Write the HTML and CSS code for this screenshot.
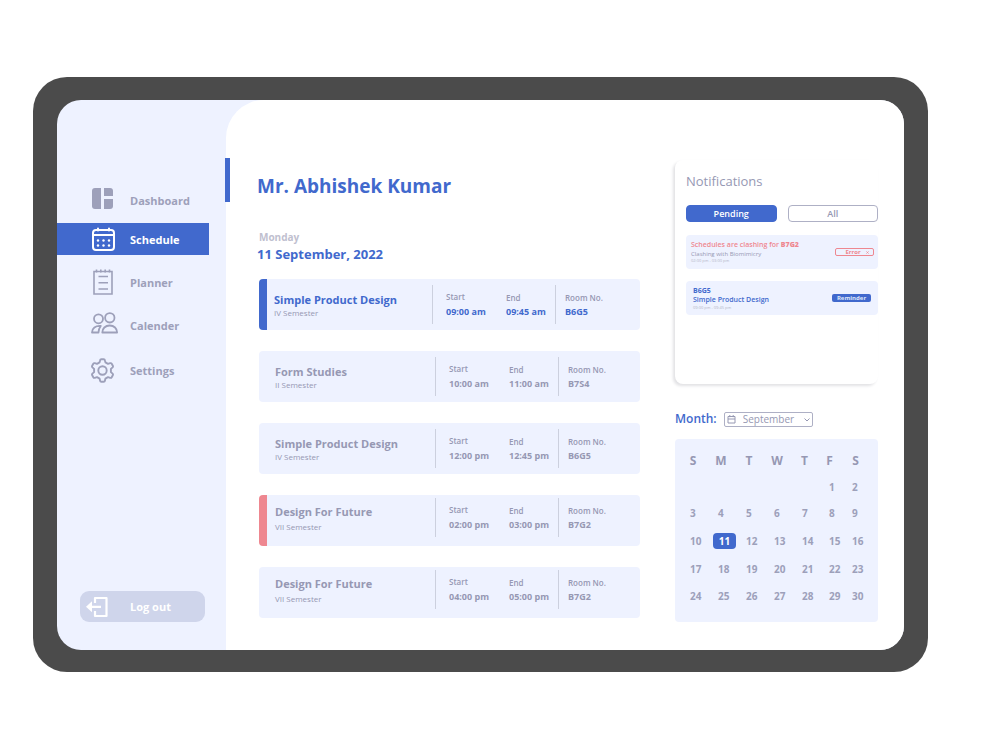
FILE: index.html
```html
<!DOCTYPE html>
<html lang="en">
<head>
<meta charset="utf-8">
<meta name="viewport" content="width=device-width, initial-scale=1">
<title>Schedule</title>
<link rel="stylesheet" href="styles.css">
</head>
<body>
<div class="tablet">
  <div class="screen">
    <aside class="sidebar">
      <nav class="nav">
        <a class="nav-item nav-item-first" href="#">
          <svg class="icon" viewBox="0 0 27 27"><g fill="currentColor"><path d="M4 1h6v21H4a3 3 0 0 1-3-3V4a3 3 0 0 1 3-3z"/><path d="M13 1h6a3 3 0 0 1 3 3v5h-9z"/><path d="M13 12h9v7a3 3 0 0 1-3 3h-6z"/></g></svg>
          <span>Dashboard</span>
        </a>
        <a class="nav-item nav-item-active" href="#">
          <svg class="icon" viewBox="0 0 27 27"><g fill="none" stroke="currentColor" stroke-width="2" stroke-linecap="round"><rect x="2" y="4" width="21" height="20" rx="3"/><path d="M2 9h21M7 2.500v2M18 2.500v2"/></g><g fill="currentColor"><circle cx="7" cy="14.500" r="1.200"/><circle cx="12.500" cy="14.500" r="1.200"/><circle cx="18" cy="14.500" r="1.200"/><circle cx="7" cy="19.500" r="1.200"/><circle cx="12.500" cy="19.500" r="1.200"/><circle cx="18" cy="19.500" r="1.200"/></g></svg>
          <span>Schedule</span>
        </a>
        <a class="nav-item" href="#">
          <svg class="icon" viewBox="0 0 27 27"><g fill="none" stroke="currentColor" stroke-width="1.600"><path d="M3 2.500h18v22.500H3z"/><path d="M5.500 .5v3M9.800 .5v3M14.200 .5v3M18.500 .5v3M7.500 7.500h9.500M7.500 13.800h9.500M7.500 20h9.500"/></g></svg>
          <span>Planner</span>
        </a>
        <a class="nav-item" href="#">
          <svg class="icon" viewBox="0 0 27 27"><g fill="none" stroke="currentColor" stroke-width="1.800" stroke-linejoin="round"><circle cx="7.500" cy="6.800" r="4.500"/><circle cx="18.800" cy="5.800" r="4.700"/><path d="M11.300 20.500c0-4 3-7 7.400-7s7.400 3 7.400 7z"/><path d="M9.800 14C4.500 13.500 1 16.500 1 20.500h6.500c0-2.500.9-4.800 2.300-6.500z"/></g></svg>
          <span>Calender</span>
        </a>
        <a class="nav-item nav-item-last" href="#">
          <svg class="icon" viewBox="0 0 27 27"><g fill="none" stroke="currentColor" stroke-width="1.900" stroke-linejoin="round"><circle cx="11.500" cy="13.500" r="4.200"/><path d="M10.300 2.200h2.400q1 0 1.200 1l.5 2.200 2.600 1.500 2.200-.7q1-.3 1.500.6l1.100 2q.5.900-.2 1.600l-1.700 1.500v3.200l1.700 1.500q.7.700.2 1.600l-1.100 2q-.5.900-1.500.6l-2.200-.7-2.600 1.500-.5 2.200q-.2 1-1.200 1h-2.400q-1 0-1.200-1l-.5-2.200L6 20.100l-2.200.7q-1 .3-1.500-.6l-1.100-2q-.5-.9.200-1.600l1.700-1.500v-3.200l-1.700-1.500q-.7-.7-.2-1.600l1.100-2q.5-.9 1.500-.6l2.200.7 2.600-1.500.5-2.200q.2-1 1.200-1z"/></g></svg>
          <span>Settings</span>
        </a>
      </nav>
      <button class="logout" type="button">
        <svg class="logout-icon" viewBox="0 0 22 22"><path d="M9 7V2h11.500v18H9v-5" fill="none" stroke="currentColor" stroke-width="2.200" stroke-linejoin="round"/><path d="M5 10.800h10" stroke="currentColor" stroke-width="2.200"/><path d="M0 10.800l6-5.500v11z" fill="currentColor"/></svg>
        <span>Log out</span>
      </button>
    </aside>

    <main class="main">
      <section class="agenda">
        <header class="profile"><h1 class="name">Mr. Abhishek Kumar</h1></header>
        <p class="weekday">Monday</p>
        <h2 class="date">11 September, 2022</h2>
        <ul class="classes">
          <li class="class class-current">
            <div class="course"><h3 class="course-name">Simple Product Design</h3><p class="semester">IV Semester</p></div>
            <dl class="times"><div class="start"><dt>Start</dt><dd>09:00 am</dd></div><div class="end"><dt>End</dt><dd>09:45 am</dd></div></dl>
            <dl class="room"><div><dt>Room No.</dt><dd>B6G5</dd></div></dl>
          </li>
          <li class="class">
            <div class="course"><h3 class="course-name">Form Studies</h3><p class="semester">II Semester</p></div>
            <dl class="times"><div class="start"><dt>Start</dt><dd>10:00 am</dd></div><div class="end"><dt>End</dt><dd>11:00 am</dd></div></dl>
            <dl class="room"><div><dt>Room No.</dt><dd>B7S4</dd></div></dl>
          </li>
          <li class="class">
            <div class="course"><h3 class="course-name">Simple Product Design</h3><p class="semester">IV Semester</p></div>
            <dl class="times"><div class="start"><dt>Start</dt><dd>12:00 pm</dd></div><div class="end"><dt>End</dt><dd>12:45 pm</dd></div></dl>
            <dl class="room"><div><dt>Room No.</dt><dd>B6G5</dd></div></dl>
          </li>
          <li class="class class-high class-clash">
            <div class="course"><h3 class="course-name">Design For Future</h3><p class="semester">VII Semester</p></div>
            <dl class="times"><div class="start"><dt>Start</dt><dd>02:00 pm</dd></div><div class="end"><dt>End</dt><dd>03:00 pm</dd></div></dl>
            <dl class="room"><div><dt>Room No.</dt><dd>B7G2</dd></div></dl>
          </li>
          <li class="class class-high">
            <div class="course"><h3 class="course-name">Design For Future</h3><p class="semester">VII Semester</p></div>
            <dl class="times"><div class="start"><dt>Start</dt><dd>04:00 pm</dd></div><div class="end"><dt>End</dt><dd>05:00 pm</dd></div></dl>
            <dl class="room"><div><dt>Room No.</dt><dd>B7G2</dd></div></dl>
          </li>
        </ul>
      </section>

      <aside class="panel">
        <section class="notifications">
          <h2 class="notifications-title">Notifications</h2>
          <div class="tabs">
            <button class="tab tab-active" type="button">Pending</button>
            <button class="tab" type="button">All</button>
          </div>
          <article class="notice notice-error">
            <div>
              <h3 class="notice-title">Schedules are clashing for <b>B7G2</b></h3>
              <p class="notice-text">Clashing with Biomimicry</p>
              <p class="notice-time">02:00 pm - 03:00 pm</p>
            </div>
            <button class="tag tag-error" type="button"><span>Error</span><svg class="tag-icon" viewBox="0 0 4 4"><path d="M.5 .5l3 3M3.500 .5l-3 3" stroke="currentColor" stroke-width="1"/></svg></button>
          </article>
          <article class="notice notice-reminder">
            <div>
              <p class="notice-room">B6G5</p>
              <h3 class="notice-title">Simple Product Design</h3>
              <p class="notice-time">09:00 pm - 09:45 pm</p>
            </div>
            <span class="tag tag-reminder">Reminder</span>
          </article>
        </section>

        <div class="month">
          <label class="month-label" for="month">Month:</label>
          <div class="month-field">
            <select class="month-select" id="month"><option>September</option></select>
            <svg class="month-calendar" viewBox="0 0 9 9"><path d="M1 1.500h7v6.500H1zM1 4h7M2.800 0v2.200M6.200 0v2.200" fill="none" stroke="currentColor"/></svg>
            <svg class="month-arrow" viewBox="0 0 6 4"><path d="M.5 .5L3 3 5.500 .5" fill="none" stroke="currentColor"/></svg>
          </div>
        </div>

        <div class="calendar">
          <table class="days">
            <colgroup><col class="day"><col class="day"><col class="day"><col class="day"><col class="day-near"><col class="day-narrow"><col></colgroup>
            <thead><tr><th>S</th><th>M</th><th>T</th><th>W</th><th>T</th><th>F</th><th>S</th></tr></thead>
            <tbody>
              <tr class="week-first"><td></td><td></td><td></td><td></td><td></td><td>1</td><td>2</td></tr>
              <tr><td>3</td><td>4</td><td>5</td><td>6</td><td>7</td><td>8</td><td>9</td></tr>
              <tr class="week-current"><td>10</td><td><span class="today">11</span></td><td>12</td><td>13</td><td>14</td><td>15</td><td>16</td></tr>
              <tr><td>17</td><td>18</td><td>19</td><td>20</td><td>21</td><td>22</td><td>23</td></tr>
              <tr><td>24</td><td>25</td><td>26</td><td>27</td><td>28</td><td>29</td><td>30</td></tr>
            </tbody>
          </table>
        </div>
      </aside>
    </main>
  </div>
</div>
</body>
</html>
```
FILE: styles.css
```css
:root {
  --blue: #4169cd;
  --pale: #eef2ff;
  --gray: #9698b3;
  --muted: #9da0ba;
  --red: #ee8790;
}

* { box-sizing: border-box; }

body {
  margin: 0;
  padding: 77px 72px 78px 33px;
  background: #fff;
  color: var(--gray);
  font-family: "Open Sans", "Noto Sans", sans-serif;
}

h1, h2, h3, p, ul, dl, dd { margin: 0; padding: 0; }
ul { list-style: none; }
button, select { font-family: inherit; }

.tablet {
  padding: 23px 24px 22px;
  border-radius: 34px;
  background: #4b4b4b;
}

.screen {
  display: grid;
  grid-template-columns: 169px 1fr;
  overflow: hidden;
  border-radius: 24px;
  background: var(--pale);
}

/* Sidebar */
.sidebar {
  display: flex;
  flex-direction: column;
  padding: 88px 0 28px;
}

.nav {
  display: flex;
  flex-direction: column;
  gap: 11px;
}

.nav-item {
  display: flex;
  align-items: center;
  gap: 12px;
  height: 32px;
  margin-right: 17px;
  padding-left: 34px;
  color: var(--muted);
  font-size: 11px;
  font-weight: 700;
  text-decoration: none;
}

.nav-item-first { height: 24px; }
.nav-item-last { height: 36px; }
.nav-item-active { background: var(--blue); color: #fff; }

.icon { flex: none; width: 27px; height: 27px; }

.logout {
  display: flex;
  align-items: center;
  gap: 22px;
  height: 31px;
  margin: auto 21px 0 23px;
  padding: 0 6px;
  border: 0;
  border-radius: 9px;
  background: #cfd5eb;
  color: #fff;
  font-size: 11px;
  font-weight: 700;
}

.logout-icon { width: 22px; height: 22px; }

/* Main area */
.main {
  display: grid;
  grid-template-columns: 1fr 203px;
  gap: 35px;
  padding: 58px 26px 28px 33px;
  border-top-left-radius: 38px;
  background: #fff;
}

.profile {
  position: relative;
  display: flex;
  align-items: center;
  height: 44px;
  padding-top: 11px;
}

.profile::before {
  position: absolute;
  top: 0;
  left: -34px;
  width: 5px;
  height: 44px;
  background: var(--blue);
  content: "";
}

.name { margin-left: -2px; color: var(--blue); font-size: 19px; font-weight: 700; line-height: 24px; }
.weekday { margin-top: 28px; color: #bfc0cf; font-size: 10px; font-weight: 700; line-height: 14px; }
.date { margin: 0 0 15px -2px; color: var(--blue); font-size: 13px; font-weight: 700; line-height: 20px; }

.classes { display: grid; gap: 21px; }

.class {
  display: grid;
  grid-template-columns: 1fr 123px 82px;
  height: 51px;
  padding: 6px 0;
  border-radius: 4px;
  background: var(--pale);
}

.class-high { padding: 3px 0 9px; }
.class-current { grid-template-columns: 1fr 123px 85px; border-left: 8px solid var(--blue); }
.class-clash { border-left: 8px solid var(--red); }

.course { padding: 7px 0 0 16px; }
.class-current .course { padding-left: 7px; }
.class-clash .course { padding-left: 8px; }
.class-high .course { padding-top: 6px; }

.course-name { font-size: 11px; font-weight: 700; line-height: 16px; }
.class-current .course-name { color: var(--blue); }
.semester { font-size: 8px; line-height: 10px; }
.class-high .semester { margin-top: 2px; }

.times, .room { display: grid; border-left: 1px solid #ccd0de; }
.times { grid-template-columns: 60px 1fr; padding-left: 13px; }
.room { padding-left: 9px; }

dt { font-size: 8px; font-weight: 600; line-height: 11px; }
dd { font-size: 9px; font-weight: 700; line-height: 14px; }
.class-current dd { color: var(--blue); }
.start { padding-top: 6px; }
.start dd { margin-top: 3px; }
.end, .room { padding-top: 7px; }
.end dd, .room dd { margin-top: 2px; }

/* Right panel */
.panel { padding-top: 2px; }

.notifications {
  height: 224px;
  padding: 12px 0 0 11px;
  border-radius: 8px;
  background: #fff;
  box-shadow: -2px 2px 3px #e2e2e5;
}

.notifications-title { font-size: 13px; font-weight: 500; line-height: 18px; }

.tabs { display: grid; grid-template-columns: 1fr 1fr; gap: 11px; margin: 15px 0 13px; }

.tab {
  height: 17px;
  padding: 0;
  border: 1px solid #aeb0c5;
  border-radius: 4px;
  background: #fff;
  color: var(--gray);
  font-size: 9px;
  font-weight: 600;
  line-height: 15px;
}

.tab-active { border-color: var(--blue); background: var(--blue); color: #fff; }

.notice {
  display: flex;
  align-items: center;
  justify-content: space-between;
  height: 34px;
  margin-bottom: 12px;
  padding: 0 4px 0 5px;
  border-radius: 4px;
  background: var(--pale);
}

.notice-reminder { padding: 0 7px; }
.notice-title { font-size: 7px; font-weight: 600; line-height: 10px; }
.notice-error .notice-title { color: var(--red); }
.notice-reminder .notice-title, .notice-room { color: var(--blue); }
.notice-room { font-size: 7px; font-weight: 700; line-height: 9px; }
.notice-text { font-size: 6px; font-weight: 500; line-height: 8px; }
.notice-time { color: #b4b6c8; font-size: 4px; line-height: 6px; }

.tag {
  display: flex;
  flex: none;
  align-items: center;
  justify-content: center;
  gap: 5px;
  width: 39px;
  height: 8px;
  padding: 0;
  border: 0;
  border-radius: 2px;
  font-size: 6px;
  font-weight: 700;
  line-height: 8px;
}

.tag-error { padding-left: 5px; border: 1px solid var(--red); background: transparent; color: var(--red); }
.tag-reminder { background: var(--blue); color: #dfe6fa; }
.tag-icon { width: 3px; height: 3px; }

.month { display: flex; align-items: center; gap: 7px; margin: 26px 0 11px; }
.month-label { color: var(--blue); font-size: 12px; font-weight: 600; line-height: 18px; }
.month-field { position: relative; }

.month-select {
  display: block;
  width: 89px;
  height: 15px;
  padding: 0 0 0 18px;
  border: 1px solid #aeb0c5;
  border-radius: 2px;
  appearance: none;
  background: #fff;
  color: var(--gray);
  font-size: 10px;
  font-weight: 500;
  line-height: 13px;
}

.month-calendar, .month-arrow { position: absolute; pointer-events: none; }
.month-calendar { top: 3px; left: 3px; width: 9px; height: 9px; }
.month-arrow { top: 6px; right: 3px; width: 6px; height: 4px; }

.calendar { padding: 8px 0 13px 12px; border-radius: 4px; background: var(--pale); }
.days { width: 100%; border-collapse: collapse; table-layout: fixed; }
.day { width: 28px; }
.day-near { width: 27px; }
.day-narrow { width: 23px; }
.days th { height: 28px; padding: 0 16px 0 0; font-size: 12px; font-weight: 700; line-height: 16px; }
.days td { height: 27px; padding: 0 0 0 3px; color: var(--muted); font-size: 10px; font-weight: 700; line-height: 14px; }
.days .week-first td { height: 24px; }
.days .week-current td { height: 29px; }

.today {
  display: block;
  width: 23px;
  margin-left: -5px;
  border-radius: 4px;
  background: var(--blue);
  color: #fff;
  line-height: 16px;
  text-align: center;
}
```
